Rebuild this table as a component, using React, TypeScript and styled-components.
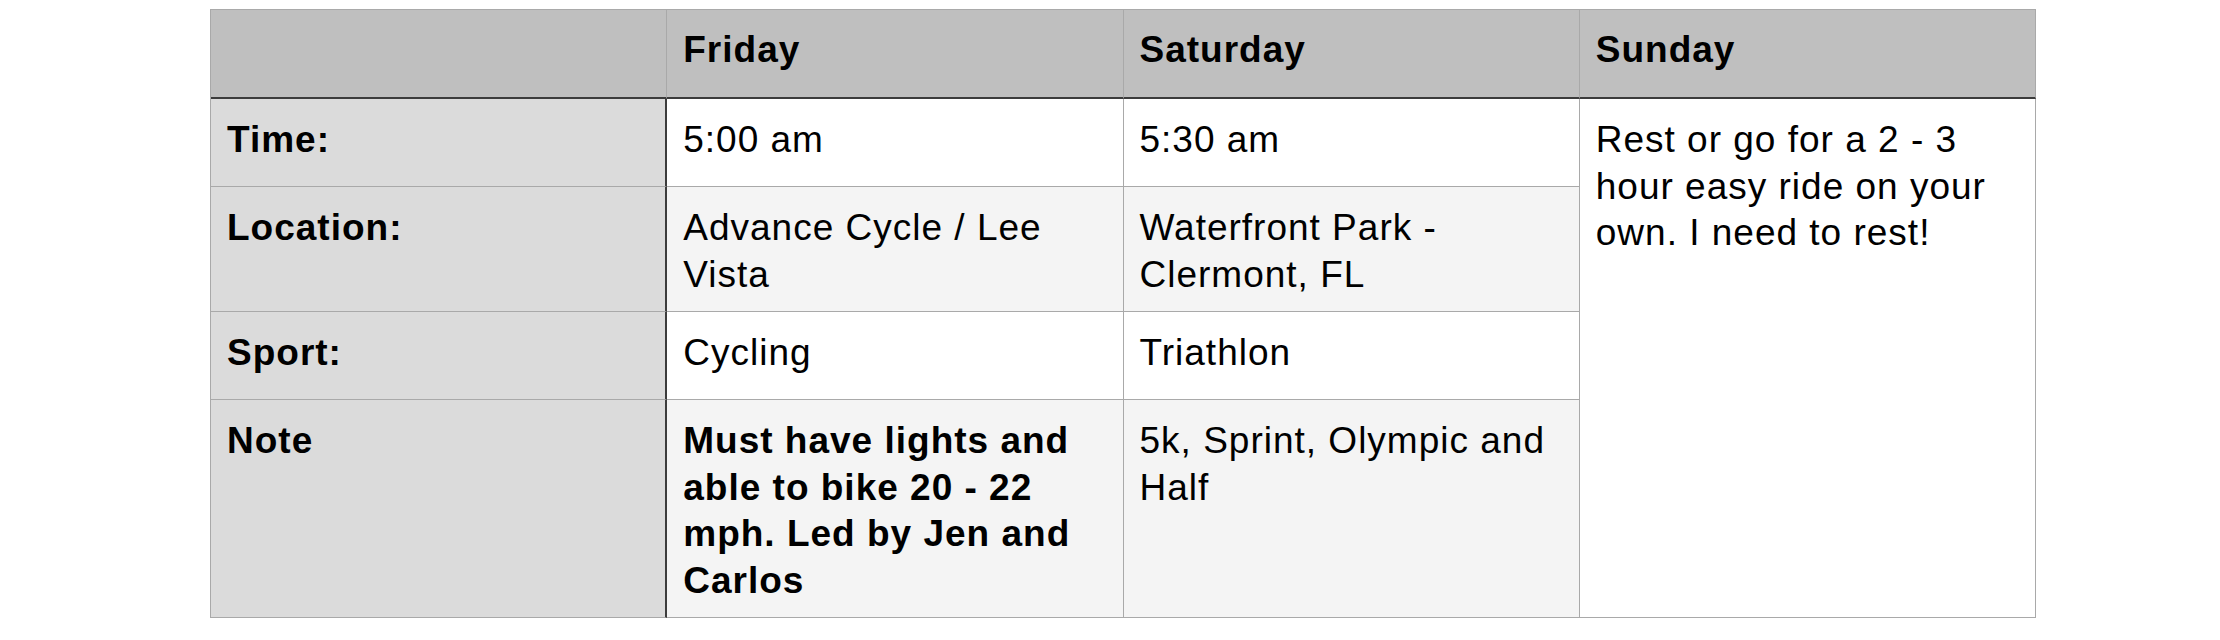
import styled, { createGlobalStyle } from 'styled-components'

const GlobalStyle = createGlobalStyle`
  html, body {
    margin: 0;
    padding: 0;
    background: #ffffff;
  }
  body {
    font-family: 'Liberation Sans', Arial, Helvetica, sans-serif;
    color: #000;
  }
`

const Page = styled.div`
  padding: 9px 0 0 210px;
`

const Table = styled.div`
  display: grid;
  grid-template-columns: repeat(4, 1fr);
  grid-template-rows: 89px repeat(4, minmax(88px, auto));
  grid-auto-flow: row;
  width: 1826px;
  box-sizing: border-box;
  border-top: 1px solid #a9a9a9;
  border-left: 1px solid #a9a9a9;
`

type CellProps = { $bg?: string; $bold?: boolean; $strongRight?: boolean }

const Cell = styled.div<CellProps>`
  box-sizing: border-box;
  padding: 18px 16px 13px;
  font-size: 37px;
  line-height: 46.5px;
  letter-spacing: 1px;
  font-weight: ${(p) => (p.$bold ? 700 : 400)};
  background: ${(p) => p.$bg || '#ffffff'};
  border-right: ${(p) => (p.$strongRight ? '2px solid #3c3c3c' : '1px solid #a9a9a9')};
  border-bottom: 1px solid #a9a9a9;
`

const HeadCell = styled(Cell)`
  padding-top: 17px;
  background: #bfbfbf;
  font-weight: 700;
  border-bottom: 2px solid #3c3c3c;
`

const LabelCell = styled(Cell).attrs({ $bold: true, $strongRight: true, $bg: '#dbdbdb' })`
  grid-column: 1;
`

const SpanCell = styled(Cell)`
  grid-column: 4;
  grid-row: 2 / span 4;
`

const rows = [
  { label: 'Time:', fri: '5:00 am', sat: '5:30 am', bg: '#ffffff' },
  { label: 'Location:', fri: 'Advance Cycle / Lee Vista', sat: 'Waterfront Park - Clermont, FL', bg: '#f4f4f4' },
  { label: 'Sport:', fri: 'Cycling', sat: 'Triathlon', bg: '#ffffff' },
  {
    label: 'Note',
    fri: 'Must have lights and able to bike 20 - 22 mph. Led by Jen and Carlos',
    sat: '5k, Sprint, Olympic and Half',
    bg: '#f4f4f4',
    boldFri: true,
  },
]

export default function App() {
  return (
    <Page>
      <GlobalStyle />
      <Table>
        <HeadCell />
        <HeadCell>Friday</HeadCell>
        <HeadCell>Saturday</HeadCell>
        <HeadCell>Sunday</HeadCell>
        <SpanCell>Rest or go for a 2 - 3 hour easy ride on your own. I need to rest!</SpanCell>
        {rows.map((r) => (
          <Row key={r.label} {...r} />
        ))}
      </Table>
    </Page>
  )
}

function Row(props: { label: string; fri: string; sat: string; bg: string; boldFri?: boolean }) {
  const { label, fri, sat, bg, boldFri } = props
  return (
    <>
      <LabelCell>{label}</LabelCell>
      <Cell $bg={bg} $bold={boldFri}>
        {fri}
      </Cell>
      <Cell $bg={bg}>{sat}</Cell>
    </>
  )
}
